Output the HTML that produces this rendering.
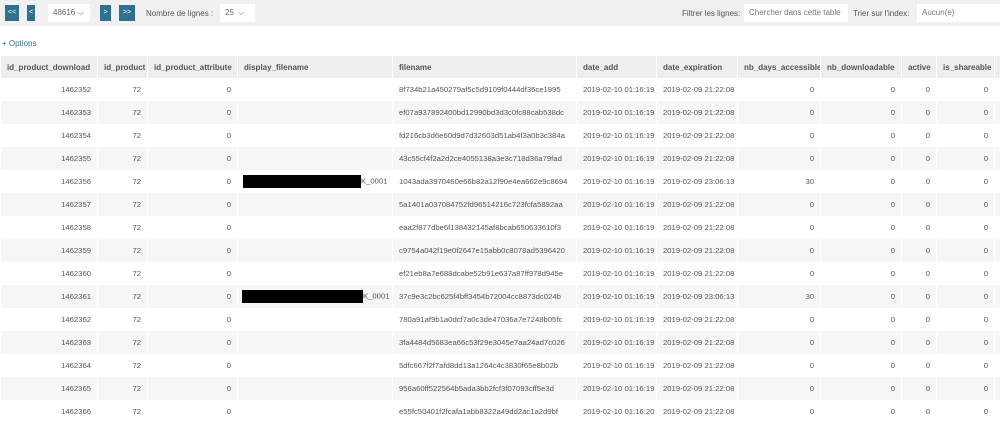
<!DOCTYPE html><html><head><style>
body{margin:0;width:1000px;height:422px;overflow:hidden;background:#fff;font-family:"Liberation Sans",sans-serif;font-size:8px;color:#555}
.bar{position:absolute;left:0;top:0;width:1000px;height:26px;background:#f0f0f0}
.a{position:absolute}
.btn{position:absolute;top:5px;height:16px;background:#31708f;color:#fff;font-size:7px;text-align:center;line-height:16px}
.sel{position:absolute;top:4px;height:18px;background:#fff;line-height:18px;padding-left:5px;box-sizing:border-box;color:#666}
table{position:absolute;top:56px;left:0;border-collapse:collapse;table-layout:fixed;width:1010px}
td,th{padding:0 6px;height:23px;white-space:nowrap;overflow:hidden;font-size:7.7px;border-left:1px solid #fff}
th{background:#eee;text-align:left;font-weight:bold;color:#555;height:22px;font-size:8px}
td{text-align:right;color:#555}
tr:nth-child(odd) td{background:#f6f6f6}
td.l{text-align:left}
.blk{display:inline-block;width:118px;height:13px;background:#000;vertical-align:middle}
</style></head><body>
<div class="bar"></div>
<div class="btn" style="left:5px;width:14px">&lt;&lt;</div>
<div class="btn" style="left:27px;width:8px">&lt;</div>
<div class="sel" style="left:48px;width:42px">48616 ⌵</div>
<div class="btn" style="left:100px;width:11px">&gt;</div>
<div class="btn" style="left:119px;width:16px">&gt;&gt;</div>
<div class="a" style="left:146px;top:9px">Nombre de lignes :</div>
<div class="sel" style="left:220px;width:35px">25 &nbsp;⌵</div>
<div class="a" style="left:682px;top:9px">Filtrer les lignes:</div>
<div class="sel" style="left:744px;width:104px;color:#777">Chercher dans cette table</div>
<div class="a" style="left:853px;top:9px">Trier sur l'index:</div>
<div class="sel" style="left:917px;width:83px;color:#777">Aucun(e)</div>
<div class="a" style="left:2px;top:39px;color:#3a6f9a">+ Options</div>
<table>
<colgroup><col style="width:97px"><col style="width:50px"><col style="width:90px"><col style="width:155px"><col style="width:184px"><col style="width:80px"><col style="width:81px"><col style="width:83px"><col style="width:81px"><col style="width:35px"><col style="width:58px"><col style="width:16px"></colgroup>
<tr><th>id_product_download</th><th>id_product</th><th>id_product_attribute</th><th>display_filename</th><th>filename</th><th>date_add</th><th>date_expiration</th><th>nb_days_accessible</th><th>nb_downloadable</th><th>active</th><th>is_shareable</th><th></th></tr>
<tr><td>1462352</td><td>72</td><td>0</td><td></td><td class="l">8f734b21a450279af5c5d9109f0444df36ce1995</td><td class="l">2019-02-10 01:16:19</td><td class="l">2019-02-09 21:22:08</td><td>0</td><td>0</td><td>0</td><td>0</td><td></td></tr>
<tr><td>1462353</td><td>72</td><td>0</td><td></td><td class="l">ef07a937892400bd12990bd3d3c0fc88cab538dc</td><td class="l">2019-02-10 01:16:19</td><td class="l">2019-02-09 21:22:08</td><td>0</td><td>0</td><td>0</td><td>0</td><td></td></tr>
<tr><td>1462354</td><td>72</td><td>0</td><td></td><td class="l">fd216cb3d6e60d9d7d32603d51ab4f3a0b3c384a</td><td class="l">2019-02-10 01:16:19</td><td class="l">2019-02-09 21:22:08</td><td>0</td><td>0</td><td>0</td><td>0</td><td></td></tr>
<tr><td>1462355</td><td>72</td><td>0</td><td></td><td class="l">43c55cf4f2a2d2ce4055138a3e3c718d36a79fad</td><td class="l">2019-02-10 01:16:19</td><td class="l">2019-02-09 21:22:08</td><td>0</td><td>0</td><td>0</td><td>0</td><td></td></tr>
<tr><td>1462356</td><td>72</td><td>0</td><td class="l" style="padding-left:5px"><span class="blk"></span>K_0001</td><td class="l">1043ada3970460e66b82a12f90e4ea662e9c8694</td><td class="l">2019-02-10 01:16:19</td><td class="l">2019-02-09 23:06:13</td><td>30</td><td>0</td><td>0</td><td>0</td><td></td></tr>
<tr><td>1462357</td><td>72</td><td>0</td><td></td><td class="l">5a1401a037084752fd96514216c723fcfa5892aa</td><td class="l">2019-02-10 01:16:19</td><td class="l">2019-02-09 21:22:08</td><td>0</td><td>0</td><td>0</td><td>0</td><td></td></tr>
<tr><td>1462358</td><td>72</td><td>0</td><td></td><td class="l">eaa2f877dbe6f138432145af8bcab650633610f3</td><td class="l">2019-02-10 01:16:19</td><td class="l">2019-02-09 21:22:08</td><td>0</td><td>0</td><td>0</td><td>0</td><td></td></tr>
<tr><td>1462359</td><td>72</td><td>0</td><td></td><td class="l">c9754a042f19e0f2647e15abb0c8078ad5396420</td><td class="l">2019-02-10 01:16:19</td><td class="l">2019-02-09 21:22:08</td><td>0</td><td>0</td><td>0</td><td>0</td><td></td></tr>
<tr><td>1462360</td><td>72</td><td>0</td><td></td><td class="l">ef21eb8a7e688dcabe52b91e637a87ff978d945e</td><td class="l">2019-02-10 01:16:19</td><td class="l">2019-02-09 21:22:08</td><td>0</td><td>0</td><td>0</td><td>0</td><td></td></tr>
<tr><td>1462361</td><td>72</td><td>0</td><td class="l" style="padding-left:4px"><span class="blk" style="width:121px"></span>K_0001</td><td class="l">37c9e3c2bc625f4bff3454b72004cc8873dc024b</td><td class="l">2019-02-10 01:16:19</td><td class="l">2019-02-09 23:06:13</td><td>30</td><td>0</td><td>0</td><td>0</td><td></td></tr>
<tr><td>1462362</td><td>72</td><td>0</td><td></td><td class="l">780a91af9b1a0dcf7a0c3de47036a7e7248b05fc</td><td class="l">2019-02-10 01:16:19</td><td class="l">2019-02-09 21:22:08</td><td>0</td><td>0</td><td>0</td><td>0</td><td></td></tr>
<tr><td>1462363</td><td>72</td><td>0</td><td></td><td class="l">3fa4484d5683ea66c53f29e3045e7aa24ad7c026</td><td class="l">2019-02-10 01:16:19</td><td class="l">2019-02-09 21:22:08</td><td>0</td><td>0</td><td>0</td><td>0</td><td></td></tr>
<tr><td>1462364</td><td>72</td><td>0</td><td></td><td class="l">5dfc667f2f7afd8dd13a1264c4c3830f65e8b02b</td><td class="l">2019-02-10 01:16:19</td><td class="l">2019-02-09 21:22:08</td><td>0</td><td>0</td><td>0</td><td>0</td><td></td></tr>
<tr><td>1462365</td><td>72</td><td>0</td><td></td><td class="l">956a60ff522564b5ada3bb2fcf3f07093cff5e3d</td><td class="l">2019-02-10 01:16:19</td><td class="l">2019-02-09 21:22:08</td><td>0</td><td>0</td><td>0</td><td>0</td><td></td></tr>
<tr><td>1462366</td><td>72</td><td>0</td><td></td><td class="l">e55fc50401f2fcafa1abb8322a49dd2ac1a2d9bf</td><td class="l">2019-02-10 01:16:20</td><td class="l">2019-02-09 21:22:08</td><td>0</td><td>0</td><td>0</td><td>0</td><td></td></tr>
</table>
</body></html>
